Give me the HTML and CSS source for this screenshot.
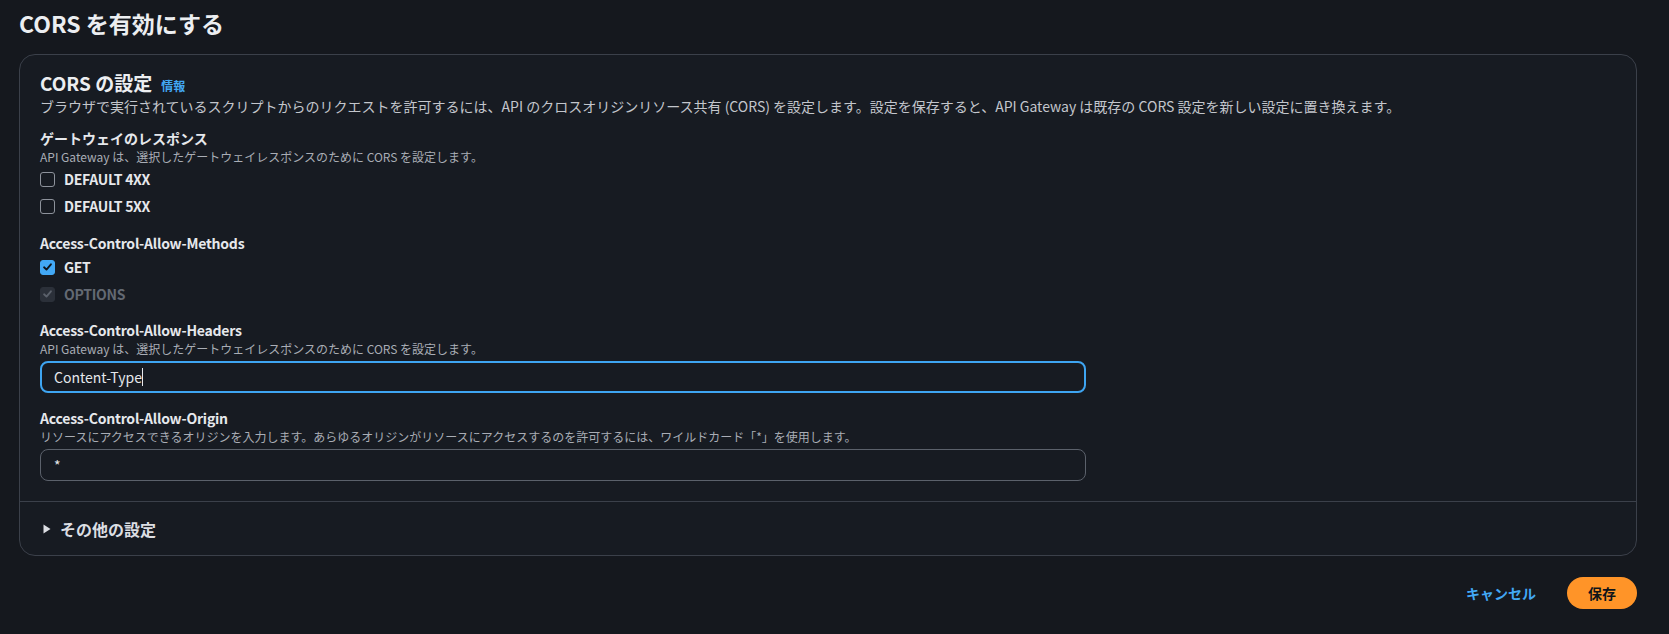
FILE: index.html
```html
<!DOCTYPE html>
<html lang="ja">
<head>
<meta charset="utf-8">
<title>CORS を有効にする</title>
<link rel="stylesheet" href="styles.css">
</head>
<body>
<div class="page">
  <h1 class="page-title">CORS を有効にする</h1>
  <div class="card">
    <div class="card-body">
      <div class="card-header">
        <h2 class="card-title">CORS の設定</h2>
        <a class="info-link">情報</a>
      </div>
      <p class="card-desc">ブラウザで実行されているスクリプトからのリクエストを許可するには、API のクロスオリジンリソース共有 (CORS) を設定します。設定を保存すると、API Gateway は既存の CORS 設定を新しい設定に置き換えます。</p>

      <div class="field field-first">
        <div class="label">ゲートウェイのレスポンス</div>
        <div class="hint">API Gateway は、選択したゲートウェイレスポンスのために CORS を設定します。</div>
        <label class="check check-first"><span class="box"></span><span class="check-text">DEFAULT 4XX</span></label>
        <label class="check"><span class="box"></span><span class="check-text">DEFAULT 5XX</span></label>
      </div>

      <div class="field field-methods">
        <div class="label label-latin">Access-Control-Allow-Methods</div>
        <label class="check check-first"><span class="box box-checked"><svg viewBox="0 0 14 14" width="14" height="14"><path d="M3.3 7.3 L5.9 9.8 L10.7 4.1" fill="none" stroke="#0f141a" stroke-width="2" stroke-linecap="round" stroke-linejoin="round"/></svg></span><span class="check-text">GET</span></label>
        <label class="check"><span class="box box-disabled"><svg viewBox="0 0 14 14" width="14" height="14"><path d="M3.3 7.3 L5.9 9.8 L10.7 4.1" fill="none" stroke="#5b616b" stroke-width="2" stroke-linecap="round" stroke-linejoin="round"/></svg></span><span class="check-text check-text-disabled">OPTIONS</span></label>
      </div>

      <div class="field field-headers">
        <div class="label label-latin">Access-Control-Allow-Headers</div>
        <div class="hint">API Gateway は、選択したゲートウェイレスポンスのために CORS を設定します。</div>
        <div class="input input-focus"><span>Content-Type</span><span class="caret"></span></div>
      </div>

      <div class="field">
        <div class="label label-latin">Access-Control-Allow-Origin</div>
        <div class="hint">リソースにアクセスできるオリジンを入力します。あらゆるオリジンがリソースにアクセスするのを許可するには、ワイルドカード「*」を使用します。</div>
        <div class="input"><span>*</span></div>
      </div>
    </div>
    <div class="card-footer">
      <svg class="caret-right" viewBox="0 0 8 10" width="8" height="10"><path d="M0.5 0.5 L7.5 5 L0.5 9.5 Z" fill="#dcdee3"/></svg>
      <span class="expander-title">その他の設定</span>
    </div>
  </div>
  <div class="actions">
    <a class="btn-link">キャンセル</a>
    <button class="btn-primary">保存</button>
  </div>
</div>
</body>
</html>
```

FILE: styles.css
```css
* { box-sizing: border-box; }
html, body {
  margin: 0;
  padding: 0;
  background: #15181e;
}
body {
  font-family: "Noto Sans CJK JP", "Noto Sans", sans-serif;
  color: #e6e8ec;
  width: 1669px;
  height: 634px;
  overflow: hidden;
}
.page {
  width: 1637px;
  padding-left: 19px;
}
.page-title {
  margin: 0;
  padding-top: 8px;
  font-size: 23px;
  line-height: 30px;
  font-weight: 700;
  color: #eceef1;
}
.card {
  margin-top: 16px;
  background: #171b22;
  border: 1px solid #3b404a;
  border-radius: 16px;
}
.card-body {
  padding: 16px 20px 20px 20px;
}
.card-header {
  display: flex;
  align-items: baseline;
  gap: 9px;
}
.card-title {
  margin: 0;
  font-size: 19px;
  line-height: 24px;
  font-weight: 700;
  color: #eceef1;
}
.info-link {
  font-size: 12px;
  font-weight: 700;
  color: #42a8f5;
}
.card-desc {
  margin: 1px 0 0;
  font-size: 14px;
  line-height: 20px;
  color: #c3c6cc;
}
.field { margin-top: 15px; }
.field-first { margin-top: 12px; }
.field-methods { margin-top: 17px; }
.field-headers { margin-top: 16px; }
.label {
  font-size: 14px;
  line-height: 20px;
  font-weight: 700;
  color: #e6e8ec;
}
.label-latin { letter-spacing: -0.22px; }
.hint {
  margin-top: 1px;
  font-size: 12px;
  line-height: 16px;
  color: #a9adb5;
}
.check {
  display: flex;
  align-items: center;
  height: 20px;
  margin-top: 7px;
}
.check-first { margin-top: 4px; }
.box {
  flex: none;
  width: 15px;
  height: 15px;
  border: 1px solid #8d929b;
  border-radius: 3px;
  display: flex;
  align-items: center;
  justify-content: center;
}
.box svg { display: block; }
.box-checked {
  background: #42a8f5;
  border-color: #42a8f5;
}
.box-disabled {
  background: #2b3039;
  border-color: #2b3039;
}
.check-text {
  margin-left: 9px;
  font-size: 14px;
  font-weight: 700;
  letter-spacing: -0.3px;
  color: #e6e8ec;
}
.check-text-disabled {
  color: #636973;
}
.input {
  margin-top: 4px;
  width: 1046px;
  height: 32px;
  border: 1px solid #5b616b;
  border-radius: 8px;
  padding: 0 13px;
  display: flex;
  align-items: center;
  font-size: 14px;
  color: #e6e8ec;
}
.input-focus {
  border: 2px solid #3ea5f2;
  padding: 0 12px;
}
.caret {
  display: inline-block;
  width: 1px;
  height: 18px;
  background: #e6e8ec;
}
.card-footer {
  border-top: 1px solid #3b404a;
  height: 54px;
  display: flex;
  align-items: center;
  padding-left: 23px;
}
.caret-right { display: block; }
.expander-title {
  margin-left: 9px;
  font-size: 16px;
  font-weight: 700;
  color: #dcdee3;
}
.actions {
  display: flex;
  justify-content: flex-end;
  align-items: center;
  gap: 31px;
  margin-top: 21px;
}
.btn-link {
  font-size: 14px;
  font-weight: 700;
  color: #42a8f5;
}
.btn-primary {
  width: 70px;
  height: 32px;
  border: none;
  border-radius: 16px;
  background: #ff9428;
  color: #0f141a;
  font-family: "Noto Sans CJK JP", "Noto Sans", sans-serif;
  font-size: 14px;
  font-weight: 700;
  padding: 0;
}
```
